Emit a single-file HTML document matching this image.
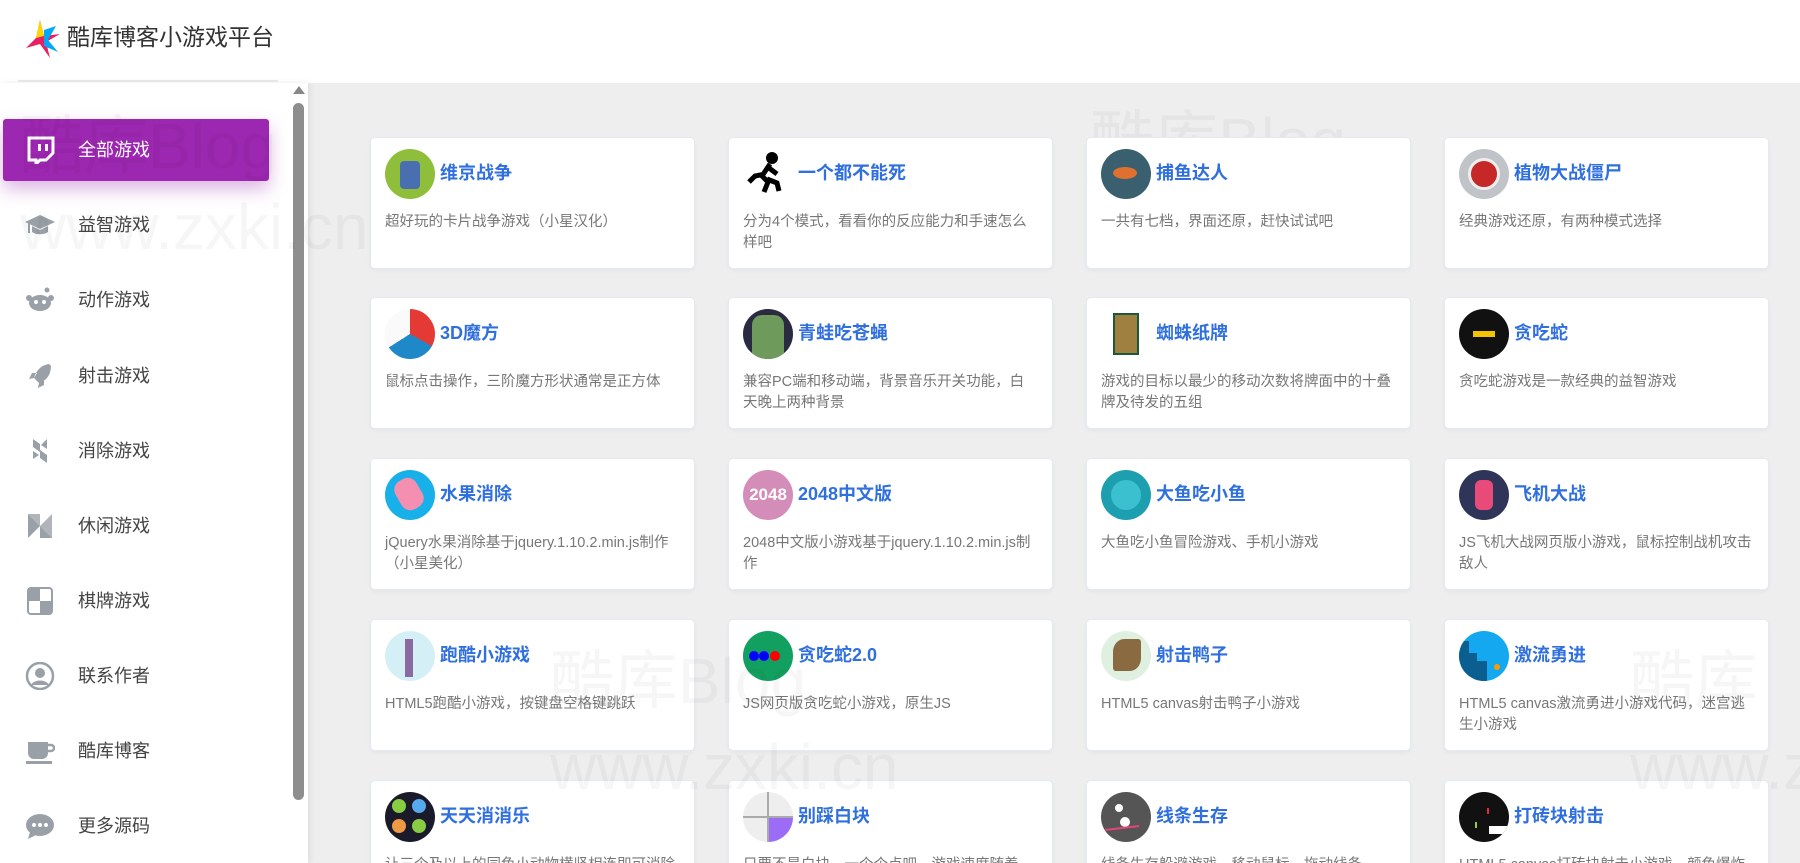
<!DOCTYPE html>
<html><head><meta charset="utf-8">
<style>
*{margin:0;padding:0;box-sizing:border-box}
html,body{width:1800px;height:863px;overflow:hidden;background:#eee;font-family:"Liberation Sans","Noto Sans CJK SC",sans-serif}
#wrap{position:relative;width:1800px;height:863px;overflow:hidden}
.header{position:absolute;left:0;top:0;width:1800px;height:83px;background:#fff}
.logo{position:absolute;left:26px;top:20px;width:36px;height:40px}
.title{position:absolute;left:67px;top:22px;font-size:23px;color:#333;line-height:30px}
.side{position:absolute;left:0;top:83px;width:308px;height:780px;background:#fff;box-shadow:2px 0 6px rgba(0,0,0,.08)}
.divider{position:absolute;left:18px;top:80px;width:260px;height:2px;background:#e6e6e6}
.sb{position:absolute;left:293px;top:103px;width:11px;height:697px;background:#8e8e8e;border-radius:6px}
.sbarrow{position:absolute;left:293px;top:86px;width:0;height:0;border-left:6px solid transparent;border-right:6px solid transparent;border-bottom:8px solid #888}
.item{position:absolute;left:3px;width:266px;height:62px;font-size:18px;color:#444;line-height:62px;padding-left:75px}
.item.active{background:#9c27b0;color:#fff;border-radius:3px;box-shadow:0 8px 18px rgba(156,39,176,.35)}
.ico{position:absolute;left:22px;top:17px;width:30px;height:28px}
.card{position:absolute;width:325px;height:132px;background:#fff;border-radius:5px;border:1px solid #e3eaf2;box-shadow:0 2px 4px rgba(0,0,0,.04)}
.card .av{position:absolute;left:14px;top:11px;width:50px;height:50px;border-radius:50%;overflow:hidden}
.card .t{position:absolute;left:69px;top:22px;font-size:18px;font-weight:bold;color:#2f6fde;line-height:26px}
.card .d{position:absolute;left:14px;top:74px;right:14px;font-size:14.5px;color:#777;line-height:20.5px}
.wm{position:absolute;font-size:64px;color:rgba(0,0,0,.035);pointer-events:none;white-space:nowrap}
</style></head><body><div id="wrap">
<div class="header">
<svg class="logo" viewBox="0 0 36 40"><polygon points="14,0 18,16 34,14 20,22 24,38 14,24 0,28 10,18" fill="#e91e63"/><polygon points="18,10 30,6 22,20 32,32 18,26" fill="#03a9f4"/><polygon points="14,0 18,16 10,18" fill="#ffd600"/></svg>
<div class="title">酷库博客小游戏平台</div>
</div>
<div class="side"></div>
<div class="divider"></div>
<div class="sbarrow"></div>
<div class="sb"></div>

<div class="item active" style="top:119px"><svg class="ico" viewBox="0 0 30 28"><path d="M4 2h24v15l-7 7h-6l-4 4v-4H4z" fill="none" stroke="#fff" stroke-width="3"/><rect x="13" y="8" width="3" height="7" fill="#fff"/><rect x="20" y="8" width="3" height="7" fill="#fff"/></svg>全部游戏</div>
<div class="item" style="top:194px"><svg class="ico" viewBox="0 0 30 28"><polygon points="15,4 30,11 15,18 0,11" fill="#9aa0a8"/><path d="M7 15v6c4 3 12 3 16 0v-6l-8 4z" fill="#9aa0a8"/><rect x="3" y="12" width="2" height="10" fill="#9aa0a8"/></svg>益智游戏</div>
<div class="item" style="top:269px"><svg class="ico" viewBox="0 0 30 28"><ellipse cx="15" cy="17" rx="11" ry="8" fill="#9aa0a8"/><circle cx="4" cy="12" r="3" fill="#9aa0a8"/><circle cx="26" cy="12" r="3" fill="#9aa0a8"/><circle cx="22" cy="4" r="2.5" fill="#9aa0a8"/><circle cx="11" cy="16" r="2" fill="#fff"/><circle cx="19" cy="16" r="2" fill="#fff"/></svg>动作游戏</div>
<div class="item" style="top:345px"><svg class="ico" viewBox="0 0 30 28"><path d="M24 2c-8 1-13 7-15 14l5 5c7-2 12-8 12-17zM9 16l-5 1 3-6h5zM14 21l-1 5 6-3v-5z" fill="#9aa0a8"/></svg>射击游戏</div>
<div class="item" style="top:420px"><svg class="ico" viewBox="0 0 30 28"><path d="M8 2l7 5v8l-7-5zM22 26l-7-5v-8l7 5zM8 14l6 4-6 4zM22 2v10l-6-4z" fill="#9aa0a8"/></svg>消除游戏</div>
<div class="item" style="top:495px"><svg class="ico" viewBox="0 0 30 28"><path d="M3 2l12 12L3 26z" fill="#9aa0a8"/><path d="M27 26L15 14 27 2z" fill="#b0b5bc"/><path d="M3 2h12l0 12z" fill="#b0b5bc"/><path d="M27 26H15V14z" fill="#9aa0a8"/></svg>休闲游戏</div>
<div class="item" style="top:570px"><svg class="ico" viewBox="0 0 30 28"><rect x="3" y="1" width="24" height="26" rx="3" fill="none" stroke="#9aa0a8" stroke-width="2"/><rect x="3" y="1" width="12" height="13" fill="#9aa0a8"/><rect x="15" y="14" width="12" height="13" fill="#9aa0a8"/></svg>棋牌游戏</div>
<div class="item" style="top:645px"><svg class="ico" viewBox="0 0 30 28"><circle cx="15" cy="14" r="13" fill="none" stroke="#9aa0a8" stroke-width="2.5"/><circle cx="15" cy="11" r="5" fill="#9aa0a8"/><path d="M6 23c3-6 15-6 18 0" fill="#9aa0a8"/></svg>联系作者</div>
<div class="item" style="top:720px"><svg class="ico" viewBox="0 0 30 28"><path d="M3 5h20v11a6 6 0 0 1-6 6H9a6 6 0 0 1-6-6z" fill="#9aa0a8"/><path d="M23 8h3a3 3 0 0 1 0 6h-3" fill="none" stroke="#9aa0a8" stroke-width="2.5"/><rect x="1" y="24" width="26" height="3" fill="#9aa0a8"/></svg>酷库博客</div>
<div class="item" style="top:795px"><svg class="ico" viewBox="0 0 30 28"><ellipse cx="15" cy="13" rx="14" ry="11" fill="#9aa0a8"/><path d="M5 20l-2 7 8-4z" fill="#9aa0a8"/><circle cx="9" cy="13" r="2" fill="#fff"/><circle cx="15" cy="13" r="2" fill="#fff"/><circle cx="21" cy="13" r="2" fill="#fff"/></svg>更多源码</div>

<div class="wm" style="left:20px;top:95px">酷库Blog</div>
<div class="wm" style="left:20px;top:190px">www.zxki.cn</div>
<div class="wm" style="left:1090px;top:90px">酷库Blog</div>

<div class="card" style="left:370px;top:137px"><div class="av" style="background:#8fbf3a"><div style="margin:12px 15px;width:20px;height:28px;background:#4a6fb0;border-radius:4px"></div></div><div class="t">维京战争</div><div class="d">超好玩的卡片战争游戏（小星汉化）</div></div>
<div class="card" style="left:728px;top:137px"><div class="av" style="background:#fff"><svg viewBox="0 0 50 50" width="50" height="50"><circle cx="29" cy="9" r="6"/><path d="M27 15l-8 12 6 6-4 10M22 25l-10 2-6 6M26 19l8 6M24 30l10 4 2 8" stroke="#000" stroke-width="5" fill="none"/></svg></div><div class="t">一个都不能死</div><div class="d">分为4个模式，看看你的反应能力和手速怎么样吧</div></div>
<div class="card" style="left:1086px;top:137px"><div class="av" style="background:#3a5f6e"><div style="margin:18px 12px;width:24px;height:12px;background:#e07030;border-radius:50%"></div></div><div class="t">捕鱼达人</div><div class="d">一共有七档，界面还原，赶快试试吧</div></div>
<div class="card" style="left:1444px;top:137px"><div class="av" style="background:#c0c4c8"><div style="margin:9px;width:32px;height:32px;background:#c62828;border-radius:50%;border:3px solid #eee"></div></div><div class="t">植物大战僵尸</div><div class="d">经典游戏还原，有两种模式选择</div></div>

<div class="card" style="left:370px;top:297px"><div class="av" style="background:conic-gradient(#e53935 0 33%,#1e88c8 0 66%,#fafafa 0)"></div><div class="t">3D魔方</div><div class="d">鼠标点击操作，三阶魔方形状通常是正方体</div></div>
<div class="card" style="left:728px;top:297px"><div class="av" style="background:#2a2a40"><div style="margin:6px 9px;width:32px;height:44px;background:#6e9a5c;border-radius:10px 10px 0 0"></div></div><div class="t">青蛙吃苍蝇</div><div class="d">兼容PC端和移动端，背景音乐开关功能，白天晚上两种背景</div></div>
<div class="card" style="left:1086px;top:297px"><div class="av" style="background:#fff"><div style="margin:4px 12px;width:26px;height:42px;background:#a08040;border:2px solid #1a5a3a"></div></div><div class="t">蜘蛛纸牌</div><div class="d">游戏的目标以最少的移动次数将牌面中的十叠牌及待发的五组</div></div>
<div class="card" style="left:1444px;top:297px"><div class="av" style="background:#111"><div style="margin:22px 14px;width:22px;height:6px;background:#f5c400"></div></div><div class="t">贪吃蛇</div><div class="d">贪吃蛇游戏是一款经典的益智游戏</div></div>

<div class="card" style="left:370px;top:458px"><div class="av" style="background:#18b0e8"><div style="margin:8px 12px;width:24px;height:32px;background:#f48fb1;border-radius:10px;transform:rotate(-30deg)"></div></div><div class="t">水果消除</div><div class="d">jQuery水果消除基于jquery.1.10.2.min.js制作（小星美化）</div></div>
<div class="card" style="left:728px;top:458px"><div class="av" style="background:#d48cb8;color:#fff;font-weight:bold;font-size:17px;line-height:50px;text-align:center">2048</div><div class="t">2048中文版</div><div class="d">2048中文版小游戏基于jquery.1.10.2.min.js制作</div></div>
<div class="card" style="left:1086px;top:458px"><div class="av" style="background:#1e9fb0"><div style="margin:10px;width:30px;height:30px;background:#3bc0d0;border-radius:50%"></div></div><div class="t">大鱼吃小鱼</div><div class="d">大鱼吃小鱼冒险游戏、手机小游戏</div></div>
<div class="card" style="left:1444px;top:458px"><div class="av" style="background:#2e3558"><div style="margin:10px 16px;width:18px;height:30px;background:#e84a7a;border-radius:6px"></div></div><div class="t">飞机大战</div><div class="d">JS飞机大战网页版小游戏，鼠标控制战机攻击敌人</div></div>

<div class="card" style="left:370px;top:619px"><div class="av" style="background:#d4f0f6"><div style="margin:8px 20px;width:8px;height:38px;background:#8a6aa0"></div></div><div class="t">跑酷小游戏</div><div class="d">HTML5跑酷小游戏，按键盘空格键跳跃</div></div>
<div class="card" style="left:728px;top:619px"><div class="av" style="background:#12a060"><svg viewBox="0 0 50 50" width="50" height="50"><circle cx="11" cy="25" r="5" fill="#00f"/><circle cx="21" cy="25" r="5" fill="#00f"/><circle cx="32" cy="25" r="5" fill="#f00"/></svg></div><div class="t">贪吃蛇2.0</div><div class="d">JS网页版贪吃蛇小游戏，原生JS</div></div>
<div class="card" style="left:1086px;top:619px"><div class="av" style="background:#dff0e0"><div style="margin:8px 12px;width:28px;height:32px;background:#8a6a40;border-radius:40% 10%"></div></div><div class="t">射击鸭子</div><div class="d">HTML5 canvas射击鸭子小游戏</div></div>
<div class="card" style="left:1444px;top:619px"><div class="av" style="background:#14a8f0"><svg viewBox="0 0 50 50" width="50" height="50"><path d="M0 10h10v12h8v8h10v20H0z" fill="#0b5e90"/><circle cx="38" cy="36" r="3" fill="#f90"/></svg></div><div class="t">激流勇进</div><div class="d">HTML5 canvas激流勇进小游戏代码，迷宫逃生小游戏</div></div>

<div class="card" style="left:370px;top:780px"><div class="av" style="background:#1a1a2a"><svg viewBox="0 0 50 50" width="50" height="50"><circle cx="14" cy="14" r="7" fill="#8c4"/><circle cx="34" cy="14" r="7" fill="#5ae"/><circle cx="14" cy="34" r="7" fill="#e94"/><circle cx="34" cy="34" r="7" fill="#8c4"/></svg></div><div class="t">天天消消乐</div><div class="d">让三个及以上的同色小动物横竖相连即可消除</div></div>
<div class="card" style="left:728px;top:780px"><div class="av" style="background:#eee"><svg viewBox="0 0 50 50" width="50" height="50"><rect x="25" y="25" width="25" height="25" fill="#9c6cf6"/><path d="M25 0v50M0 25h50" stroke="#aaa" stroke-width="2"/></svg></div><div class="t">别踩白块</div><div class="d">只要不是白块，一个个点吧，游戏速度随着</div></div>
<div class="card" style="left:1086px;top:780px"><div class="av" style="background:#555"><svg viewBox="0 0 50 50" width="50" height="50"><circle cx="18" cy="16" r="4" fill="#fff"/><circle cx="24" cy="30" r="5" fill="#fff"/><path d="M4 38l34-4" stroke="#e2457a" stroke-width="2"/></svg></div><div class="t">线条生存</div><div class="d">线条生存躲避游戏，移动鼠标，拖动线条</div></div>
<div class="card" style="left:1444px;top:780px"><div class="av" style="background:#111"><svg viewBox="0 0 50 50" width="50" height="50"><rect x="30" y="34" width="20" height="8" fill="#fff"/><rect x="28" y="16" width="2" height="6" fill="#e24"/><rect x="16" y="30" width="2" height="6" fill="#9c3"/></svg></div><div class="t">打砖块射击</div><div class="d">HTML5 canvas打砖块射击小游戏，颜色爆炸</div></div>

<div class="wm" style="left:550px;top:630px">酷库Blog</div>
<div class="wm" style="left:550px;top:730px">www.zxki.cn</div>
<div class="wm" style="left:1630px;top:630px">酷库</div>
<div class="wm" style="left:1630px;top:730px">www.z</div>
</div></body></html>
